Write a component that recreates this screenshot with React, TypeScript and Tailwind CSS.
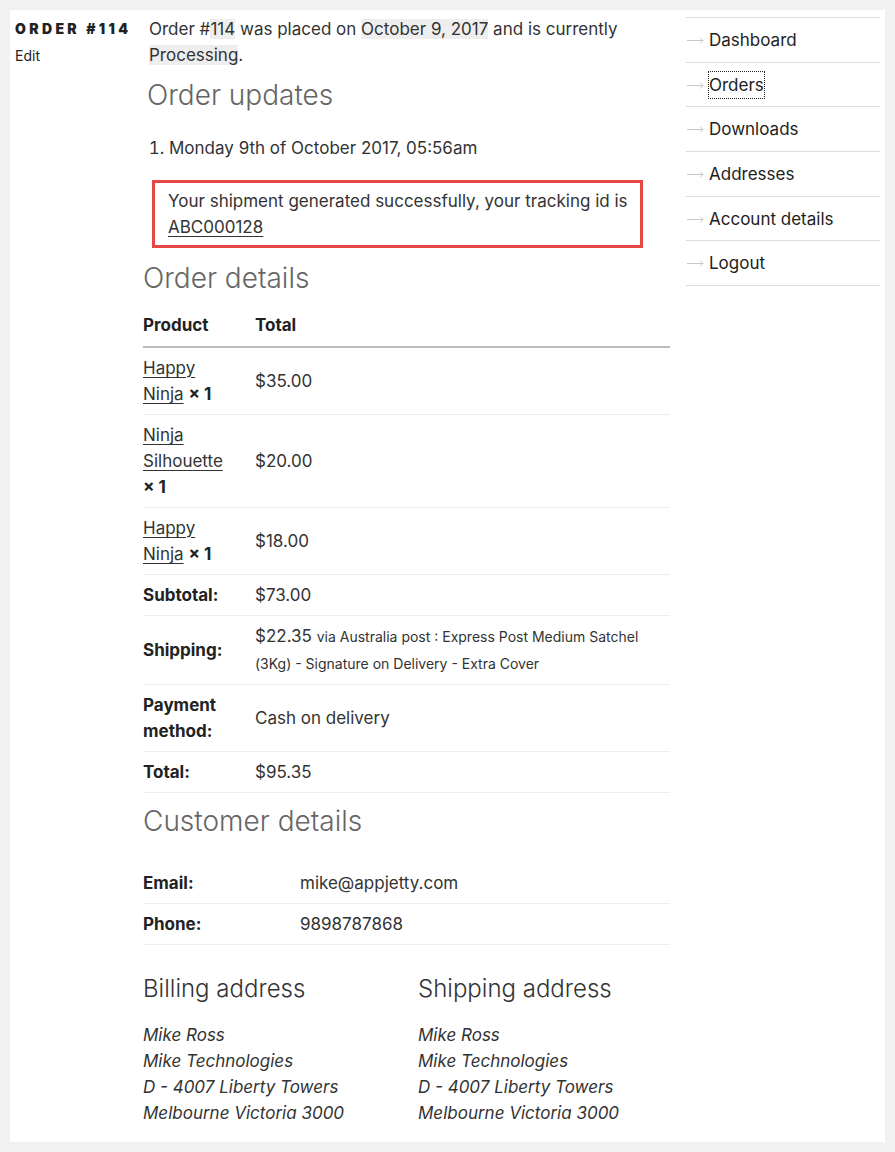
import { ReactNode } from 'react'

const navItems = ['Dashboard', 'Orders', 'Downloads', 'Addresses', 'Account details', 'Logout']

function Mark({ children }: { children: ReactNode }) {
  return <mark className="bg-[#eeeeee] text-[#333]">{children}</mark>
}

function ItemRow({ name, price }: { name: ReactNode; price: string }) {
  return (
    <tr className="border-b border-[#eeeeee]">
      <td className="w-[112px] py-[7px] pr-[24px] align-middle">
        {name} <strong className="font-bold text-[#222]">×&nbsp;1</strong>
      </td>
      <td className="py-[7px] align-middle">{price}</td>
    </tr>
  )
}

function TotalRow({ label, children }: { label: string; children: ReactNode }) {
  return (
    <tr className="border-b border-[#eeeeee]">
      <th className="w-[112px] py-[7px] pr-[24px] text-left align-middle font-bold text-[#222]">{label}</th>
      <td className="py-[7px] align-middle">{children}</td>
    </tr>
  )
}

function Address() {
  return (
    <address className="mt-[17px] italic leading-[26px]">
      Mike Ross
      <br />
      Mike Technologies
      <br />
      D - 4007 Liberty Towers
      <br />
      Melbourne Victoria 3000
    </address>
  )
}

function Arrow() {
  return (
    <svg width="17" height="8" viewBox="0 0 17 8" className="mr-[5px] shrink-0" fill="none" stroke="#c8c8c8" strokeWidth="1">
      <path d="M0 4.5h16M13 1.5l3 3-3 3" />
    </svg>
  )
}

export default function App() {
  return (
    <div className="min-h-[1152px] bg-[#f1f1f1] p-[10px] font-['Inter',sans-serif] text-[17px] leading-[26px] text-[#333]">
      <div className="flex min-h-[1132px] bg-white pt-[6px] pr-[5px]">
        <div className="w-[133px] shrink-0 pl-[5px]">
          <div className="text-[14px] font-black tracking-[0.24em] text-[#222] uppercase">Order #114</div>
          <a className="text-[14px] text-[#222]">Edit</a>
        </div>

        <main className="w-[527px] shrink-0">
          <p className="pl-[6px]">
            Order #<Mark>114</Mark> was placed on <Mark>October 9, 2017</Mark> and is currently{' '}
            <Mark>Processing</Mark>.
          </p>

          <h2 className="mt-[9px] pl-[4px] text-[28px] leading-[36px] font-light text-[#666]">Order updates</h2>
          <ol className="mt-[22px] list-decimal pl-[26px]">
            <li>
              Monday 9th of October 2017, 05:56am
              <div className="mt-[19px] -ml-[17px] w-[491px] border-[3px] border-[#e64646] py-[5px] pr-[4px] pl-[13px]">
                Your shipment generated successfully, your tracking id is{' '}
                <a className="underline underline-offset-[3px]">ABC000128</a>
              </div>
            </li>
          </ol>

          <h2 className="mt-[12px] text-[28px] leading-[36px] font-light text-[#666]">Order details</h2>
          <table className="mt-[16px] w-full border-collapse">
            <thead>
              <tr className="border-b-2 border-[#bbbbbb]">
                <th className="pb-[8px] text-left font-bold text-[#222]">Product</th>
                <th className="pb-[8px] text-left font-bold text-[#222]">Total</th>
              </tr>
            </thead>
            <tbody>
              <ItemRow name={<a className="underline underline-offset-[3px]">Happy Ninja</a>} price="$35.00" />
              <ItemRow name={<a className="underline underline-offset-[3px]">Ninja Silhouette</a>} price="$20.00" />
              <ItemRow name={<a className="underline underline-offset-[3px]">Happy Ninja</a>} price="$18.00" />
            </tbody>
            <tfoot>
              <TotalRow label="Subtotal:">$73.00</TotalRow>
              <TotalRow label="Shipping:">
                $22.35{' '}
                <small className="text-[14px] leading-[26px]">
                  via Australia post : Express Post Medium Satchel (3Kg) - Signature on Delivery - Extra Cover
                </small>
              </TotalRow>
              <TotalRow label="Payment method:">Cash on delivery</TotalRow>
              <TotalRow label="Total:">$95.35</TotalRow>
            </tfoot>
          </table>

          <h2 className="mt-[10px] text-[28px] leading-[36px] font-light text-[#666]">Customer details</h2>
          <table className="mt-[24px] w-full border-collapse">
            <tbody>
              <tr className="border-b border-[#eeeeee]">
                <th className="w-[157px] py-[7px] text-left font-bold text-[#222]">Email:</th>
                <td className="py-[7px]">mike@appjetty.com</td>
              </tr>
              <tr className="border-b border-[#eeeeee]">
                <th className="w-[157px] py-[7px] text-left font-bold text-[#222]">Phone:</th>
                <td className="py-[7px]">9898787868</td>
              </tr>
            </tbody>
          </table>

          <div className="mt-[28px] grid grid-cols-[275px_1fr]">
            <div>
              <h3 className="text-[24px] leading-[32px] font-light text-[#333]">Billing address</h3>
              <Address />
            </div>
            <div>
              <h3 className="text-[24px] leading-[32px] font-light text-[#333]">Shipping address</h3>
              <Address />
            </div>
          </div>
        </main>

        <nav className="ml-[16px] mt-[1px] w-[194px] shrink-0">
          <ul className="border-t border-[#dddddd]">
            {navItems.map((item) => (
              <li key={item} className="flex h-[44.7px] items-center border-b border-[#dddddd] pl-[1px] text-[17px] text-[#222]">
                <Arrow />
                <a className={item === 'Orders' ? 'outline-1 outline-dotted outline-[#222]' : ''}>{item}</a>
              </li>
            ))}
          </ul>
        </nav>
      </div>
    </div>
  )
}
